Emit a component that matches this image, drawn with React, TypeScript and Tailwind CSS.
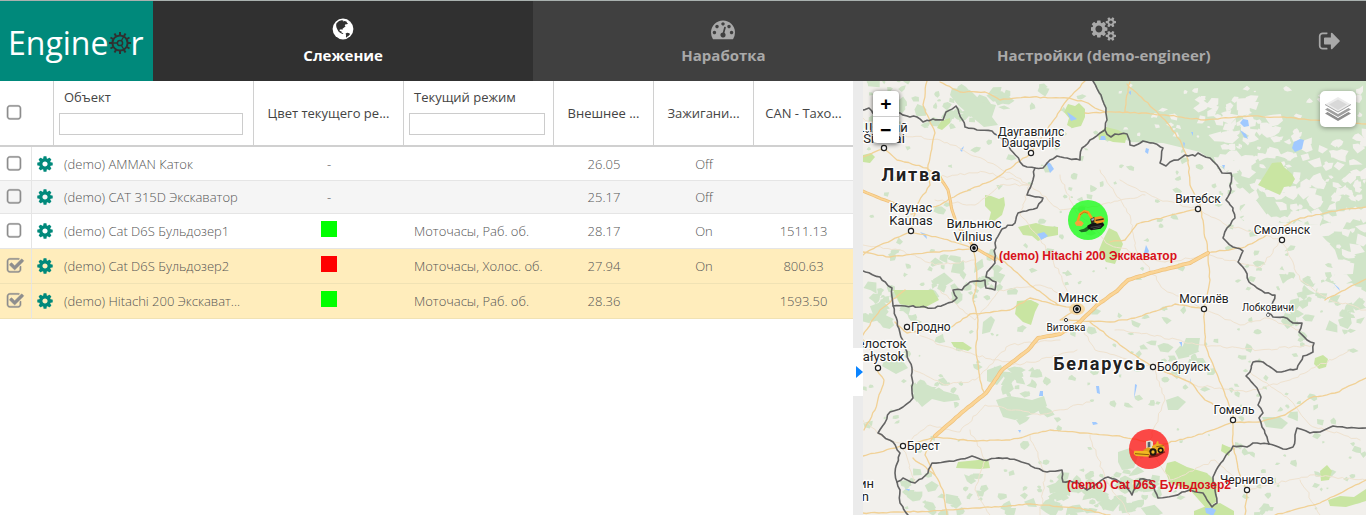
import { useState } from "react";

type Unit = {
  id: number;
  name: string;
  color: string;
  mode: string;
  voltage: string;
  ignition: string;
  tacho: string;
};

type Point = [number, number];

const units: Unit[] = [
  { id: 1, name: "(demo) AMMAN Каток", color: "", mode: "", voltage: "26.05", ignition: "Off", tacho: "" },
  { id: 2, name: "(demo) CAT 315D Экскаватор", color: "", mode: "", voltage: "25.17", ignition: "Off", tacho: "" },
  { id: 3, name: "(demo) Cat D6S Бульдозер1", color: "green", mode: "Моточасы, Раб. об.", voltage: "28.17", ignition: "On", tacho: "1511.13" },
  { id: 4, name: "(demo) Cat D6S Бульдозер2", color: "red", mode: "Моточасы, Холос. об.", voltage: "27.94", ignition: "On", tacho: "800.63" },
  { id: 5, name: "(demo) Hitachi 200 Экскават...", color: "green", mode: "Моточасы, Раб. об.", voltage: "28.36", ignition: "", tacho: "1593.50" },
];

const icons = {
  cog: "M1152 896q0-106-75-181t-181-75-181 75-75 181 75 181 181 75 181-75 75-181zm512-109v222q0 12-8 23t-20 13l-185 28q-19 54-39 91 35 50 107 138 10 12 10 25t-9 23q-27 37-99 108t-94 71q-12 0-26-9l-138-108q-44 23-91 38-16 136-29 186-7 28-36 28h-222q-14 0-24.5-8.5t-11.5-21.5l-28-184q-49-16-90-37l-141 107q-10 9-25 9-14 0-25-11-126-114-165-168-7-10-7-23 0-12 8-23 15-21 51-66.5t54-70.5q-27-50-41-99l-183-27q-13-2-21-12.5t-8-23.5v-222q0-12 8-23t19-13l186-28q14-46 39-92-40-57-107-138-10-12-10-24 0-10 9-23 26-36 98.5-107.5t94.5-71.5q13 0 26 10l138 107q44-23 91-38 16-136 29-186 7-28 36-28h222q14 0 24.5 8.5t11.5 21.5l28 184q49 16 90 37l142-107q9-9 24-9 13 0 25 10 129 119 165 170 7 8 7 22 0 12-8 23-15 21-51 66.5t-54 70.5q26 50 41 98l183 28q13 2 21 12.5t8 23.5z",
  cogs: "M832 896q0-106-75-181t-181-75-181 75-75 181 75 181 181 75 181-75 75-181zm768 512q0-52-38-90t-90-38-90 38-38 90q0 53 37.5 90.5t90.5 37.5 90.5-37.5 37.5-90.5zm0-1024q0-52-38-90t-90-38-90 38-38 90q0 53 37.5 90.5t90.5 37.5 90.5-37.5 37.5-90.5zm-384 421v185q0 10-7 19.5t-16 10.5l-155 24q-11 35-32 76 34 48 90 115 7 11 7 20 0 12-7 19-23 30-82.5 89.5t-78.5 59.5q-11 0-21-7l-115-90q-37 19-77 31-11 108-23 155-7 24-30 24h-186q-11 0-20-7.5t-10-17.5l-23-153q-34-10-75-31l-118 89q-7 7-20 7-11 0-21-8-144-133-144-160 0-9 7-19 10-14 41-53t47-61q-23-44-35-82l-152-24q-10-1-17-9.5t-7-19.5v-185q0-10 7-19.5t16-10.5l155-24q11-35 32-76-34-48-90-115-7-11-7-20 0-12 7-20 22-30 82-89t79-59q11 0 21 7l115 90q34-18 77-32 11-108 23-154 7-24 30-24h186q11 0 20 7.5t10 17.5l23 153q34 10 75 31l118-89q8-7 20-7 11 0 21 8 144 133 144 160 0 8-7 19-12 16-42 54t-45 60q23 48 34 82l152 23q10 2 17 10.5t7 19.5zm640 533v140q0 16-149 31-12 27-30 52 51 113 51 138 0 4-4 7-122 71-124 71-8 0-46-47t-52-68q-20 2-30 2t-30-2q-14 21-52 68t-46 47q-2 0-124-71-4-3-4-7 0-25 51-138-18-25-30-52-149-15-149-31v-140q0-16 149-31 13-29 30-52-51-113-51-138 0-4 4-7 4-2 35-20t59-34 30-16q8 0 46 46.5t52 67.5q20-2 30-2t30 2q51-71 92-112l6-2q4 0 124 70 4 3 4 7 0 25-51 138 17 23 30 52 149 15 149 31zm0-1024v140q0 16-149 31-12 27-30 52 51 113 51 138 0 4-4 7-122 71-124 71-8 0-46-47t-52-68q-20 2-30 2t-30-2q-14 21-52 68t-46 47q-2 0-124-71-4-3-4-7 0-25 51-138-18-25-30-52-149-15-149-31v-140q0-16 149-31 13-29 30-52-51-113-51-138 0-4 4-7 4-2 35-20t59-34 30-16q8 0 46 46.5t52 67.5q20-2 30-2t30 2q51-71 92-112l6-2q4 0 124 70 4 3 4 7 0 25-51 138 17 23 30 52 149 15 149 31z",
  gauge: "M384 1152q0-53-37.5-90.5t-90.5-37.5-90.5 37.5-37.5 90.5 37.5 90.5 90.5 37.5 90.5-37.5 37.5-90.5zm192-448q0-53-37.5-90.5t-90.5-37.5-90.5 37.5-37.5 90.5 37.5 90.5 90.5 37.5 90.5-37.5 37.5-90.5zm428 481l101-382q6-26-7.5-48.5t-38.5-29.5-48 6.5-30 39.5l-101 382q-60 5-107 43.5t-63 98.5q-20 77 20 146t117 89 146-20 89-117q16-60-6-117t-72-91zm660-33q0-53-37.5-90.5t-90.5-37.5-90.5 37.5-37.5 90.5 37.5 90.5 90.5 37.5 90.5-37.5 37.5-90.5zm-640-640q0-53-37.5-90.5t-90.5-37.5-90.5 37.5-37.5 90.5 37.5 90.5 90.5 37.5 90.5-37.5 37.5-90.5zm448 192q0-53-37.5-90.5t-90.5-37.5-90.5 37.5-37.5 90.5 37.5 90.5 90.5 37.5 90.5-37.5 37.5-90.5zm320 448q0 261-141 483-19 29-54 29h-1402q-35 0-54-29-141-221-141-483 0-182 71-348t191-286 286-191 348-71 348 71 286 191 191 286 71 348z",
  signOut: "M704 1440q0 4 1 20t.5 26.5-3 23.5-10 19.5-20.5 6.5h-320q-119 0-203.5-84.5t-84.5-203.5v-704q0-119 84.5-203.5t203.5-84.5h320q13 0 22.5 9.5t9.5 22.5q0 4 1 20t.5 26.5-3 23.5-10 19.5-20.5 6.5h-320q-66 0-113 47t-47 113v704q0 66 47 113t113 47h312l11.5 1 11.5 3 8 5.5 7 9 2 13.5zm928-544q0 26-19 45l-544 544q-19 19-45 19t-45-19-19-45v-288h-448q-26 0-45-19t-19-45v-384q0-26 19-45t45-19h448v-288q0-26 19-45t45-19 45 19l544 544q19 19 19 45z",
  square: "M1312 256h-832q-66 0-113 47t-47 113v832q0 66 47 113t113 47h832q66 0 113-47t47-113v-832q0-66-47-113t-113-47zm288 160v832q0 119-84.5 203.5t-203.5 84.5h-832q-119 0-203.5-84.5t-84.5-203.5v-832q0-119 84.5-203.5t203.5-84.5h832q119 0 203.5 84.5t84.5 203.5z",
  checked: "M1600 930v318q0 119-84.5 203.5t-203.5 84.5h-832q-119 0-203.5-84.5t-84.5-203.5v-832q0-119 84.5-203.5t203.5-84.5h832q63 0 117 25 15 7 18 23 3 17-9 29l-49 49q-10 10-23 10-3 0-9-2-23-6-45-6h-832q-66 0-113 47t-47 113v832q0 66 47 113t113 47h832q66 0 113-47t47-113v-254q0-13 9-22l64-64q10-10 23-10 6 0 12 3 20 8 20 29zm231-489l-814 814q-24 24-57 24t-57-24l-430-430q-24-24-24-57t24-57l110-110q24-24 57-24t57 24l263 263 647-647q24-24 57-24t57 24l110 110q24 24 24 57t-24 57z",
};

function Icon({ path, className, wide }: { path: string; className: string; wide?: boolean }) {
  return (
    <svg viewBox={wide ? "0 0 1920 1792" : "0 0 1792 1792"} className={className} fill="currentColor" aria-hidden="true">
      <path d={path} />
    </svg>
  );
}

function GlobeIcon() {
  return (
    <svg viewBox="0 0 24 24" className="size-6" aria-hidden="true">
      <circle cx="12" cy="12" r="10.4" fill="#fff" />
      <path
        fill="#303030"
        d="M5.5 6.2 8 4l2.6-.8 1.8.3-.6.9 1.6-.4 2 .6.6 1.2 1 .9-1.1.5-1.4.1-.8 1.3.9.6-1.5 1.3-1.6 1.2-.1 1.4-1.2-.8-1.6.4.2 1.6 1.6-.3-.1 1.3 1.3.8.9.9-1-.1-2-1-1.8-1.1-1.3-2.2-1-2.3-.3-2.4z"
      />
      <path fill="#303030" d="m14.6 16.6 1.6-.8 2.3.5.4 1.1-1.5 1.6-1.3.7-.4 1-.8-.9.2-1.5z" />
    </svg>
  );
}

function LogoGear() {
  const teeth = Array.from({ length: 12 }, (_, i) => i * 30);
  return (
    <svg viewBox="0 0 24 24" className="size-6" fill="none" stroke="#303030" aria-hidden="true">
      {teeth.map((angle) => (
        <path key={angle} d="M12 4V1" strokeWidth="2" transform={`rotate(${angle} 12 12)`} />
      ))}
      <circle cx="12" cy="12" r="7.6" strokeWidth="2" />
      <path d="M12 12 15.5 6M12 12H5M12 12l3.500 6" strokeWidth="1.300" />
      <circle cx="12" cy="12" r="2.600" fill="#00897b" strokeWidth="1.500" />
    </svg>
  );
}

function Checkbox({ label, checked, onChange }: { label: string; checked: boolean; onChange: () => void }) {
  return (
    <label className="relative ml-[5px] block size-[18px] cursor-pointer text-[#8e8e8e]">
      <input
        type="checkbox"
        aria-label={label}
        checked={checked}
        onChange={onChange}
        className="absolute inset-0 size-full cursor-pointer appearance-none"
      />
      <Icon
        path={checked ? icons.checked : icons.square}
        className="size-[18px] overflow-visible stroke-current stroke-[40]"
      />
    </label>
  );
}

/* ---------- map ---------- */

function createRandom(seed: number) {
  let s = seed;
  return () => {
    s = (s * 16807) % 2147483647;
    return s / 2147483647;
  };
}

// turns a coarse polyline into a slightly ragged one
function ragged(points: Point[], seed: number, amount: number) {
  const random = createRandom(seed);
  let d = `M${points[0][0]} ${points[0][1]}`;
  for (let i = 1; i < points.length; i++) {
    const [x0, y0] = points[i - 1];
    const [x1, y1] = points[i];
    const steps = Math.max(1, Math.round(Math.hypot(x1 - x0, y1 - y0) / 4));
    for (let k = 1; k <= steps; k++) {
      const jitter = k === steps ? 0 : amount;
      const x = x0 + ((x1 - x0) * k) / steps + (random() - 0.5) * jitter;
      const y = y0 + ((y1 - y0) * k) / steps + (random() - 0.5) * jitter;
      d += `L${x.toFixed(1)} ${y.toFixed(1)}`;
    }
  }
  return d;
}

// scatters small irregular patches over a rectangle
function scatter(x: number, y: number, w: number, h: number, count: number, size: number, seed: number) {
  const random = createRandom(seed * 7919);
  random();
  let d = "";
  for (let i = 0; i < count; i++) {
    const cx = x + random() * w;
    const cy = y + random() * h;
    const r = size * (0.35 + random() * 0.9);
    const n = 4 + Math.floor(random() * 4);
    const turn = random() * 6;
    for (let k = 0; k < n; k++) {
      const a = turn + (k / n) * Math.PI * 2;
      const q = r * (0.4 + random() * 0.8);
      d += `${k ? "L" : "M"}${(cx + Math.cos(a) * q).toFixed(1)} ${(cy + Math.sin(a) * q * 0.8).toFixed(1)}`;
    }
    d += "Z";
  }
  return d;
}

const forests = [
  scatter(863, 81, 230, 220, 80, 5, 3),
  scatter(863, 81, 110, 45, 26, 7, 5),
  scatter(950, 85, 60, 35, 14, 8, 8),
  scatter(1040, 130, 180, 150, 42, 5, 11),
  scatter(863, 300, 230, 165, 50, 5, 13),
  scatter(863, 285, 60, 40, 22, 8, 15),
  scatter(930, 255, 70, 45, 26, 8, 17),
  scatter(990, 370, 60, 50, 22, 7, 19),
  scatter(900, 375, 60, 25, 10, 7, 21),
  scatter(1090, 300, 170, 165, 52, 5, 23),
  scatter(1240, 290, 126, 225, 62, 5, 27),
  scatter(1285, 275, 81, 60, 34, 8, 29),
  scatter(905, 470, 310, 45, 85, 7, 31),
  scatter(1050, 480, 110, 35, 34, 9, 33),
  scatter(1160, 340, 40, 35, 8, 8, 37),
  scatter(1210, 175, 156, 115, 62, 5, 39),
].join("");

const clearings = [
  scatter(1115, 84, 251, 42, 26, 5, 41),
  scatter(1195, 95, 60, 30, 24, 8, 43),
  scatter(1215, 120, 60, 55, 42, 9, 44),
  scatter(1265, 130, 101, 55, 46, 7, 45),
  scatter(1225, 180, 141, 40, 64, 8, 47),
  scatter(1285, 210, 81, 80, 52, 9, 49),
  scatter(1120, 125, 90, 22, 10, 4, 51),
].join("");

const parks = [
  "M1068 104l7 2 4-3 6 6 0 8-4 9-9 2-5-3 2-7-5-6z",
  "M1098 134l8-7 12 3 9 5-2 8-12-1-8-3-6 1z",
  "M985 195l6 1 8 3 5-2 1 8 -3 10-8 6-5-1 2-8-6-6z",
  "M1018 227l18-4 10 3 12 1 0 8-11 2-9 4-6-5-9-1z",
  "M1272 163l9-1 3 5 8 7 3 5-4 7-7 1-4 8-9-4-13-6 6-9z",
  "M1017 301l14-1 8 4-4 8-4 13-8-3-8-8z",
  "M1103 240l6-12 8 4 6 12-8 20-9-2-7-12z",
  "M1167 463l8-2 12 6 20 6 10 11-1 18-10 6-16-18-20-7-5-12z",
  "M1222 444l9 4-2 8-8-5z",
  "M1320 471l7-6 5 6-3 9-8 1z",
  "M1328 500l12-4 14 1 12-8v12l-20 6-16-1z",
  "M893 290l40 0 6 10-15 8-24-4z",
  "M951 342l12 0 9 6-4 3-14-4z",
  "M958 462l30-3 2 9-10 1-24-1z",
  "M1194 511l10-4 16-4 14 8v4h-40z",
  "M941 121l9-3 0 5-8 7-5-2z",
  "M1315 358l8-3 5 4-2 8-7 2-5-5z",
  "M863 155l8-2 4 4-5 6-7-1z",
];

const woods = [
  "M952 88l18 2 12 12 14 3-4 12 6 8-14 2-12-10-14-12-8-10z",
  "M910 385l14-2 12 6 22 6 2 5-16 2-12-3-10 8-5-6z",
  "M996 400l14-4 22 4 12-4 3 10-14 8-18 6-12-3z",
  "M987 370l14-5 4 10-8 10-10-4z",
  "M1118 452l12-4 8 8-4 12-12 2-4-8z",
  "M1186 338l14 0-2 14-10 4-6-8z",
  "M1166 400l12-4 8 6-8 8-10 0z",
  "M1262 417l18 0 8 6-6 6-16-2z",
  "M983 322l8-6 4 4-5 12-8 2z",
  "M885 358l14-2 9 12-12 6-14-8z",
];

const lakes = [
  "M1067 112l6 4 4 3-6 2z",
  "M1243 119l5 1 1 6-5 1-4-4zM1240 130l6 4 2 5-4-2z",
  "M1294 142l6-3 4 1-2 9-7 3-3-4z",
  "M1037 234l7-2 4 4-7 4z",
  "M1101 136l4 0 1 4-6 0z",
  "M1146 148l3 1-1 5-3-2zM1128 92l3-1 0 4zM1191 132l2 0 0 4zM1183 142l2 1-1 5z",
  "M1146 245l3 6-2 4-3-2z",
  "M1137 385l-3 14 1-15zM1191 378l-2 8 2-6z",
  "M1205 508l7 0 4 2-3 6-7-3z",
  "M1040 391l3 0 0 5-4 0zM1096 386l3 0 1 8-3-1z",
  "M1018 430l3 0-1 3zM1092 422l4 0 2 2-5 1z",
  "M1046 162l4 1 4 6-4 4zM960 150l4-4-2 6zM920 232l6 2 1 5z",
  "M1179 342l3 0 0 5zM905 489l5 0-1 2zM1222 165l3 0-1 4zM1333 283l6 5 1 3z",
];

const minorRoads: Point[][] = [
  [[863, 118], [900, 135], [940, 140], [985, 160], [1030, 185]],
  [[940, 177], [985, 172], [1030, 185], [1060, 210], [1100, 205], [1145, 195]],
  [[1030, 185], [1020, 215], [1045, 245], [1077, 309]],
  [[1120, 180], [1160, 200], [1198, 209], [1226, 225], [1282, 240]],
  [[1100, 170], [1130, 215], [1136, 250], [1165, 290], [1204, 309]],
  [[1060, 175], [1075, 210], [1110, 245], [1165, 262]],
  [[907, 327], [940, 345], [975, 355], [1020, 365], [1077, 350]],
  [[912, 368], [945, 385], [975, 380], [1010, 345], [1060, 340]],
  [[903, 446], [930, 425], [960, 432], [985, 405], [1040, 415], [1090, 402]],
  [[1077, 320], [1095, 350], [1153, 367], [1165, 400], [1150, 440]],
  [[1115, 330], [1150, 335], [1204, 345], [1260, 350], [1313, 345]],
  [[1204, 309], [1240, 325], [1268, 318], [1300, 330]],
  [[1157, 367], [1195, 385], [1246, 392], [1290, 380], [1350, 350]],
  [[1250, 372], [1290, 400], [1310, 425], [1360, 440]],
  [[1150, 450], [1170, 480], [1215, 460], [1247, 490], [1310, 475], [1366, 480]],
  [[970, 430], [985, 460], [975, 490], [990, 515]],
  [[1030, 435], [1045, 472], [1040, 515]],
  [[1090, 435], [1105, 477], [1130, 515]],
  [[1282, 240], [1300, 280], [1330, 300], [1366, 310]],
  [[1282, 240], [1260, 268], [1210, 255], [1165, 262]],
  [[863, 245], [900, 250], [935, 265], [975, 260]],
  [[935, 200], [975, 205], [1000, 185], [1030, 185]],
  [[940, 290], [975, 320], [1000, 290], [1040, 285], [1077, 300]],
  [[863, 420], [880, 435], [903, 446], [915, 483]],
  [[1300, 480], [1320, 515]],
];

const roads: Point[][] = [
  [[927, 81], [923, 105], [935, 133], [928, 165], [930, 185], [917, 205], [911, 231]],
  [[863, 157], [884, 148], [897, 160], [927, 168], [940, 177]],
  [[911, 214], [940, 205], [957, 195], [993, 180], [1030, 154], [1047, 130], [1067, 100], [1085, 81]],
  [[940, 82], [960, 92], [985, 92], [1000, 100], [1025, 97], [1067, 98], [1085, 102], [1106, 113]],
  [[863, 255], [880, 245], [911, 232], [940, 238], [974, 248]],
  [[863, 252], [890, 257], [935, 252], [974, 248], [1005, 262], [1030, 285], [1058, 305], [1077, 309]],
  [[974, 248], [977, 280], [973, 300], [978, 320], [976, 350], [980, 380], [984, 392]],
  [[895, 322], [907, 333], [950, 328], [970, 314], [1010, 310], [1030, 298], [1058, 305]],
  [[1130, 82], [1126, 100], [1125, 112]],
  [[1085, 113], [1127, 112], [1165, 115], [1205, 120], [1250, 116], [1295, 118], [1340, 123], [1366, 124]],
  [[1127, 84], [1165, 120], [1180, 140], [1188, 160], [1190, 185], [1200, 205], [1208, 253], [1210, 280], [1204, 309], [1205, 345], [1215, 370], [1233, 415], [1233, 445], [1240, 475], [1247, 490], [1245, 515]],
  [[1110, 242], [1125, 240], [1137, 224], [1180, 213], [1198, 209]],
  [[1208, 253], [1245, 247], [1270, 233], [1300, 218], [1340, 210], [1366, 207]],
  [[1077, 309], [1060, 320], [1110, 322], [1135, 318], [1175, 304], [1204, 309]],
  [[1090, 322], [1120, 345], [1153, 367], [1190, 382], [1205, 400], [1233, 415]],
  [[863, 456], [903, 446], [935, 437], [975, 441], [1010, 440], [1050, 430], [1080, 433], [1120, 436], [1160, 445], [1195, 436], [1233, 422]],
  [[1233, 422], [1260, 422], [1285, 415], [1310, 398], [1335, 393], [1366, 378]],
  [[913, 458], [935, 475], [943, 490], [947, 515]],
  [[863, 513], [910, 512], [980, 508], [1030, 504], [1080, 508], [1110, 515]],
  [[1275, 515], [1320, 503], [1366, 480]],
  [[1325, 300], [1366, 279]],
  [[877, 370], [884, 380], [875, 410], [864, 430]],
  [[877, 368], [868, 345], [863, 340]],
  [[863, 335], [880, 310], [905, 290]],
  [[933, 437], [925, 455], [935, 475]],
];

const motorways: Point[][] = [
  [[935, 436], [965, 410], [986, 393], [1002, 370], [1028, 350], [1038, 338], [1060, 334], [1080, 322], [1097, 305], [1117, 291], [1128, 280], [1150, 273], [1190, 263], [1208, 253]],
  [[863, 191], [877, 197], [897, 205], [911, 210]],
  [[940, 177], [948, 190], [952, 210], [957, 225], [974, 247], [995, 260]],
];

const borders: Point[][] = [
  [[863, 110], [869, 108], [875, 116], [900, 113], [907, 116], [917, 117], [923, 122], [933, 119], [943, 120], [946, 112], [956, 106], [965, 127], [977, 130], [992, 131], [1007, 143], [1020, 162], [1027, 167], [1035, 168], [1043, 168], [1050, 160], [1057, 156], [1067, 158], [1080, 160], [1082, 148], [1090, 140], [1100, 133], [1105, 130], [1107, 120], [1106, 108], [1101, 95], [1093, 81]],
  [[1105, 130], [1111, 137], [1115, 134], [1127, 134], [1130, 145], [1134, 146], [1143, 141], [1153, 143], [1163, 148], [1160, 163], [1166, 166], [1170, 162], [1178, 160], [1185, 155], [1195, 156], [1198, 153], [1210, 158], [1217, 165], [1222, 173], [1231, 173], [1230, 193], [1226, 200], [1233, 208], [1235, 218], [1227, 228], [1223, 238], [1233, 247], [1243, 251], [1238, 262], [1245, 270], [1249, 282], [1257, 288], [1265, 293], [1275, 295], [1272, 305], [1268, 313], [1273, 317], [1283, 317], [1293, 323], [1302, 323], [1299, 332], [1307, 340], [1314, 343], [1313, 352], [1303, 356], [1297, 369], [1277, 372], [1263, 362], [1253, 362], [1250, 372], [1246, 376], [1257, 388], [1261, 397], [1258, 405], [1263, 413], [1259, 418], [1262, 427], [1267, 437], [1269, 444]],
  [[1269, 444], [1283, 449], [1293, 447], [1297, 428], [1310, 433], [1320, 432], [1333, 426], [1347, 428], [1366, 428]],
  [[1269, 444], [1253, 443], [1247, 447], [1233, 446], [1228, 453], [1218, 467], [1213, 477], [1215, 490], [1217, 503], [1212, 507], [1203, 493], [1190, 490], [1182, 492], [1173, 496], [1158, 498], [1150, 480], [1140, 479], [1132, 495], [1123, 483], [1108, 477], [1098, 483], [1087, 490], [1077, 482], [1063, 482], [1062, 470], [1047, 472], [1035, 468], [1025, 463], [1007, 458], [983, 460], [972, 456], [957, 460], [932, 463], [928, 473], [915, 483], [903, 478], [897, 482]],
  [[863, 271], [880, 277], [892, 288], [893, 305], [900, 333], [912, 368], [913, 398], [903, 407], [890, 412], [878, 433], [893, 442], [900, 453], [895, 473], [897, 482], [900, 490], [900, 503], [908, 515]],
  [[1035, 168], [1032, 183], [1027, 195], [1043, 198], [1037, 208], [1018, 213], [1015, 223], [1002, 229], [995, 243], [995, 263], [987, 272], [986, 277], [996, 282], [995, 290], [986, 288], [985, 280], [970, 282], [962, 290], [953, 290], [957, 298], [952, 302], [935, 308], [920, 307], [905, 306], [893, 306]],
];

type Place = { x: number; y: number; size: number; text: string; anchor?: "start" | "end" };

const places: Place[] = [
  { x: 884, y: 132, size: 13, text: "Шяуляй" },
  { x: 884, y: 143, size: 13, text: "Šiauliai" },
  { x: 1031, y: 136, size: 12, text: "Даугавпилс" },
  { x: 1031, y: 147, size: 12, text: "Daugavpils" },
  { x: 911, y: 212, size: 13, text: "Каунас" },
  { x: 911, y: 225, size: 13, text: "Kaunas" },
  { x: 974, y: 228, size: 13, text: "Вильнюс" },
  { x: 973, y: 241, size: 13, text: "Vilnius" },
  { x: 1198, y: 203, size: 12, text: "Витебск" },
  { x: 1282, y: 234, size: 12, text: "Смоленск" },
  { x: 1078, y: 302, size: 13, text: "Минск" },
  { x: 1066, y: 331, size: 10, text: "Витовка" },
  { x: 911, y: 331, size: 12, text: "Гродно", anchor: "start" },
  { x: 878, y: 348, size: 13, text: "Белосток" },
  { x: 878, y: 361, size: 13, text: "Białystok" },
  { x: 1157, y: 371, size: 12, text: "Бобруйск", anchor: "start" },
  { x: 1204, y: 303, size: 12, text: "Могилёв" },
  { x: 1268, y: 311, size: 10, text: "Лобковичи" },
  { x: 1234, y: 414, size: 12, text: "Гомель" },
  { x: 1247, y: 484, size: 12, text: "Чернигов" },
  { x: 907, y: 450, size: 12, text: "Брест", anchor: "start" },
  { x: 874, y: 488, size: 13, text: "Люблин", anchor: "end" },
  { x: 869, y: 501, size: 13, text: "Lublin", anchor: "end" },
];

const towns: Point[] = [
  [884, 148], [1031, 153], [911, 231], [1198, 209], [1282, 240], [907, 327], [878, 368],
  [1153, 367], [1204, 309], [1233, 420], [1247, 490], [903, 446],
];

const capitals: Point[] = [[974, 248], [1077, 309]];

function Excavator() {
  return (
    <g transform="translate(1060 195) scale(.3333)">
      <circle cx="84" cy="75" r="60" fill="#00ff00" fillOpacity=".7" />
      <path d="M56 106l16-5 12-8 10 6-16 11-14 2z" fill="#1d6b22" />
      <path d="M44 84l8-9 12 3 7 7-6 9-16-2z" fill="#f6a23a" />
      <path d="M50 76l7-21 15-10 14 3 16 24-7 4-14-21-9-1-9 7-6 17z" fill="#f6a01f" />
      <path d="M60 60l12-9 12 4" stroke="#a96410" strokeWidth="2" fill="none" />
      <path d="M82 92l14-8 32-3 5 9-11 11-28 5-11-6z" fill="#151515" />
      <path d="M92 97l32-5M98 102l24-6" stroke="#5a5a5a" strokeWidth="2" />
      <path d="M91 72l13-7 3 16-13 5z" fill="#33271c" />
      <path d="M94 72l7-3 1 6-7 3z" fill="#9db6c9" />
      <path d="M103 67l20-4 10 7v11l-22 5-8-5z" fill="#f29a22" />
      <path d="M107 76l24-4" stroke="#3c2a16" strokeWidth="4" />
    </g>
  );
}

function Bulldozer() {
  return (
    <g transform="translate(1124 424) scale(.3333)">
      <circle cx="75" cy="75" r="60" fill="#ff0000" fillOpacity=".7" />
      <path d="M70 96l34-8 16-8 4 5-24 13-24 4z" fill="#8e1a14" />
      <path d="M66 52l14-3 7 4v20l-20 3z" fill="#e6dfcf" />
      <path d="M71 55l8-2v16l-8 2z" fill="#59616d" />
      <path d="M84 66l12-6 3-8 4 0 1 7 12 3 6 8-1 12-18 6-19-4z" fill="#eeb022" />
      <path d="M97 68l22-3" stroke="#6b4508" strokeWidth="2" />
      <path d="M58 78l14-8 16 6-8 14-18-2z" fill="#e0a018" />
      <circle cx="87" cy="84" r="11" fill="#1f1a10" />
      <circle cx="87" cy="84" r="5" fill="#f0b82e" />
      <circle cx="110" cy="79" r="9" fill="#1f1a10" />
      <circle cx="110" cy="79" r="4" fill="#f0b82e" />
      <path d="M31 80l38 1 9 6-4 11-38-2-7-7z" fill="#f2b722" />
      <path d="M33 89l42 3" stroke="#8b5c08" strokeWidth="3" />
    </g>
  );
}

function MapCanvas() {
  return (
    <svg
      viewBox="863 81 503 434"
      preserveAspectRatio="xMinYMin slice"
      className="absolute inset-0 size-full font-[Roboto,sans-serif]"
      role="img"
      aria-label="Карта"
    >
      <rect x="863" y="81" width="503" height="434" fill="#f2f0ec" />
      <path
        d="M1093 81H1366V292L1345 280 1335 250 1312 225 1272 222 1256 200 1240 185 1225 170 1200 152 1163 143 1130 142 1107 128 1107 112z"
        fill="#d0e4c8"
      />
      <path d={forests} fill="#d0e4c8" />
      {woods.map((d) => (
        <path key={d} d={d} fill="#d0e4c8" />
      ))}
      <path d={clearings} fill="#f2f0ec" />
      {parks.map((d) => (
        <path key={d} d={d} fill="#c9e5a2" />
      ))}
      {lakes.map((d) => (
        <path key={d} d={d} fill="#a0c9ff" />
      ))}
      <ellipse cx="1077" cy="309" rx="8" ry="6" fill="#f7d9a4" />

      <g fill="none" strokeLinejoin="round" strokeLinecap="round">
        {minorRoads.map((line, i) => (
          <path key={i} d={ragged(line, i + 60, 2.5)} stroke="#efe2cf" strokeWidth="1" />
        ))}
        {roads.map((line, i) => (
          <path key={i} d={ragged(line, i + 20, 1.2)} stroke="#f1d196" strokeWidth="1.3" />
        ))}
        {motorways.map((line, i) => (
          <path key={i} d={ragged(line, i + 5, 0.5)} stroke="#eec07a" strokeWidth={i ? 3 : 4} />
        ))}
        {motorways.map((line, i) => (
          <path key={i} d={ragged(line, i + 5, 0.5)} stroke="#fbd596" strokeWidth={i ? 1.6 : 2.6} />
        ))}
        {borders.map((line, i) => (
          <path key={i} d={ragged(line, i + 90, 1.8)} stroke="#636363" strokeWidth="1.6" />
        ))}
      </g>

      {towns.map(([x, y]) => (
        <circle key={`${x}-${y}`} cx={x} cy={y} r="2.600" fill="#fff" stroke="#222" strokeWidth="1.200" />
      ))}
      <circle cx="1066" cy="320" r="1.600" fill="#fff" stroke="#333" />
      <circle cx="1268" cy="315" r="1.600" fill="#fff" stroke="#777" />
      {capitals.map(([x, y]) => (
        <g key={x}>
          <circle cx={x} cy={y} r="3.500" fill="#fff" stroke="#111" strokeWidth="1.300" />
          <circle cx={x} cy={y} r="1.900" fill="#111" />
        </g>
      ))}

      <g fill="#222" stroke="#fff" strokeWidth="2.500" strokeLinejoin="round" paintOrder="stroke" textAnchor="middle">
        {places.map((place) => (
          <text key={place.text} x={place.x} y={place.y} fontSize={place.size} textAnchor={place.anchor}>
            {place.text}
          </text>
        ))}
        <g className="text-[18px] font-bold tracking-widest">
          <text x="912" y="181">Литва</text>
          <text x="1100" y="370">Беларусь</text>
        </g>
      </g>

      <Excavator />
      <Bulldozer />
      <g className="font-['Liberation_Sans',sans-serif] text-[12px] font-bold" fill="#d8101a" textAnchor="middle">
        <text x="1088" y="260">(demo) Hitachi 200 Экскаватор</text>
        <text x="1149" y="489">(demo) Cat D6S Бульдозер2</text>
      </g>
    </svg>
  );
}

function LayersIcon() {
  return (
    <svg viewBox="0 0 26 26" className="size-[26px]" aria-hidden="true">
      <path d="M0 17.500 13 25l13-7.500-3-1.700-10 5.700-10-5.700z" fill="#8f8f8f" />
      <path d="M0 14.500 13 22l13-7.500-3-1.700-10 5.700-10-5.700z" fill="#fff" />
      <path d="M0 13.500 13 21l13-7.500-3-1.700-10 5.700-10-5.700z" fill="#a0a0a0" />
      <path d="M0 10.500 13 18l13-7.500-3-1.700z" fill="#fff" />
      <path d="M0 8.500 13 16l13-7.500L13 1z" fill="#ececec" />
      <path d="M4 8.500 13 3.500l9 5-9 5.500z" fill="#d8d8d8" />
      <path d="M0 8.500 13 16l13-7.500" fill="none" stroke="#a8a8a8" />
    </svg>
  );
}

const tabClass = "flex flex-1 flex-col items-center gap-0.5 pt-4 text-[15px] leading-6 font-bold";
const headClass = "border-r border-b-2 border-r-[#d0d0d0] border-b-[#d0d0d0] p-0 text-center font-normal last:border-r-0";

export default function App() {
  const [selected, setSelected] = useState<number[]>([4, 5]);

  function toggle(id: number) {
    setSelected(selected.includes(id) ? selected.filter((item) => item !== id) : [...selected, id]);
  }

  function toggleAll() {
    setSelected(selected.length === units.length ? [] : units.map((unit) => unit.id));
  }

  return (
    <div className="flex min-h-screen flex-col bg-white font-['Open_Sans',sans-serif]">
      {/* Header */}
      <header className="flex h-[81px] shrink-0 border-t border-[#a9b1af] bg-[#404040]">
        <a href="#" className="flex w-[153px] shrink-0 items-center bg-[#00897b] pt-1 pl-2 text-[32px] text-white">
          <span>Engine</span>
          <LogoGear />
          <span className="-ml-0.5">r</span>
        </a>
        <nav className="flex flex-1">
          <a href="#tracking" className={`${tabClass} bg-[#303030] text-white`}>
            <GlobeIcon />
            Слежение
          </a>
          <a href="#work" className={`${tabClass} text-[#a9a9a9]`}>
            <Icon path={icons.gauge} className="size-6" />
            Наработка
          </a>
          <a href="#settings" className={`${tabClass} text-[#a9a9a9]`}>
            <Icon path={icons.cogs} wide className="h-6 w-[26px]" />
            Настройки (demo-engineer)
          </a>
        </nav>
        <button type="button" aria-label="Выход" className="flex w-[72px] items-center justify-center text-[#a9a9a9]">
          <Icon path={icons.signOut} className="size-6" />
        </button>
      </header>

      <main className="flex flex-1">
        {/* Units table */}
        <section className="min-w-0 flex-1 overflow-hidden">
          <table className="w-full table-fixed border-separate border-spacing-0 text-[13px] leading-5">
            <colgroup>
              <col className="w-8" />
              <col className="w-[22px]" />
              <col className="w-[200px]" />
              <col className="w-[150px]" />
              <col className="w-[150px]" />
              <col className="w-[100px]" />
              <col className="w-[100px]" />
              <col />
            </colgroup>
            <thead className="text-[#444]">
              <tr className="h-[66px]">
                <th colSpan={2} className={headClass}>
                  <Checkbox label="Выбрать все" checked={selected.length === units.length} onChange={toggleAll} />
                </th>
                <th className={`${headClass} align-top`}>
                  <label htmlFor="object" className="mt-1.5 block pl-2.5 text-left">
                    Объект
                  </label>
                  <div className="mt-1.5 mr-2.5 ml-[5px] flex">
                    <input id="object" type="text" className="h-[22px] w-full border border-[#ccc] px-1" />
                  </div>
                </th>
                <th className={headClass}>Цвет текущего ре...</th>
                <th className={`${headClass} align-top`}>
                  <label htmlFor="mode" className="mt-1.5 block pl-2.5 text-left">
                    Текущий режим
                  </label>
                  <div className="mt-1.5 mr-2 ml-[5px] flex">
                    <input id="mode" type="text" className="h-[22px] w-full border border-[#ccc] px-1" />
                  </div>
                </th>
                <th className={headClass}>Внешнее ...</th>
                <th className={headClass}>Зажигани...</th>
                <th className={headClass}>CAN - Тахо...</th>
              </tr>
            </thead>
            <tbody className="text-center font-light text-[#555]">
              {units.map((unit) => {
                const active = selected.includes(unit.id);
                const cell = `border-b p-0 ${active ? "border-[#f0e2b4]" : "border-[#e5e5e5]"}`;
                return (
                  <tr
                    key={unit.id}
                    className={`first:h-[34px] ${unit.color ? "h-[35px]" : "h-[33px]"} ${
                      active ? "bg-[#ffedbc]" : "even:bg-[#f5f5f5]"
                    }`}
                  >
                    <td className={`${cell} border-r border-r-[#e5e5e5]`}>
                      <Checkbox label={unit.name} checked={active} onChange={() => toggle(unit.id)} />
                    </td>
                    <td className={cell}>
                      <button type="button" aria-label="Настройки объекта" className="ml-1 block text-[#00897b]">
                        <Icon path={icons.cog} className="size-[18px]" />
                      </button>
                    </td>
                    <td className={`${cell} truncate pl-2.5 text-left`}>{unit.name}</td>
                    <td className={cell}>
                      {unit.color ? (
                        <div className={`mx-auto mb-1 size-4 ${unit.color === "red" ? "bg-[#f00]" : "bg-[#0f0]"}`} />
                      ) : (
                        "-"
                      )}
                    </td>
                    <td className={`${cell} truncate pl-2.5 text-left`}>{unit.mode}</td>
                    <td className={cell}>{unit.voltage}</td>
                    <td className={cell}>{unit.ignition}</td>
                    <td className={cell}>{unit.tacho}</td>
                  </tr>
                );
              })}
            </tbody>
          </table>
        </section>

        {/* Splitter */}
        <div className="flex w-2.5 shrink-0 flex-col justify-center bg-[#ebebeb] pt-[148px]">
          <button type="button" aria-label="Свернуть таблицу" className="flex h-12 items-center justify-end bg-white">
            <svg viewBox="0 0 7 12" className="h-3 w-[7px] fill-[#0a84ff]" aria-hidden="true">
              <path d="M0 0 7 6 0 12z" />
            </svg>
          </button>
        </div>

        {/* Map */}
        <section className="relative w-[503px] shrink-0 overflow-hidden bg-[#f2f0ec]">
          <MapCanvas />
          <div className="absolute top-2.5 left-2.5 flex flex-col rounded bg-white font-['DejaVu_Sans_Mono',monospace] text-lg leading-[26px] font-bold text-black shadow-[0_1px_5px_rgba(0,0,0,0.65)]">
            <button type="button" aria-label="Приблизить" className="size-[26px] border-b border-[#ccc]">
              +
            </button>
            <button type="button" aria-label="Отдалить" className="size-[26px]">
              −
            </button>
          </div>
          <button
            type="button"
            aria-label="Слои"
            className="absolute top-2.5 right-2.5 flex size-9 items-center justify-center rounded-[5px] bg-white shadow-[0_1px_5px_rgba(0,0,0,0.4)]"
          >
            <LayersIcon />
          </button>
        </section>
      </main>
    </div>
  );
}
